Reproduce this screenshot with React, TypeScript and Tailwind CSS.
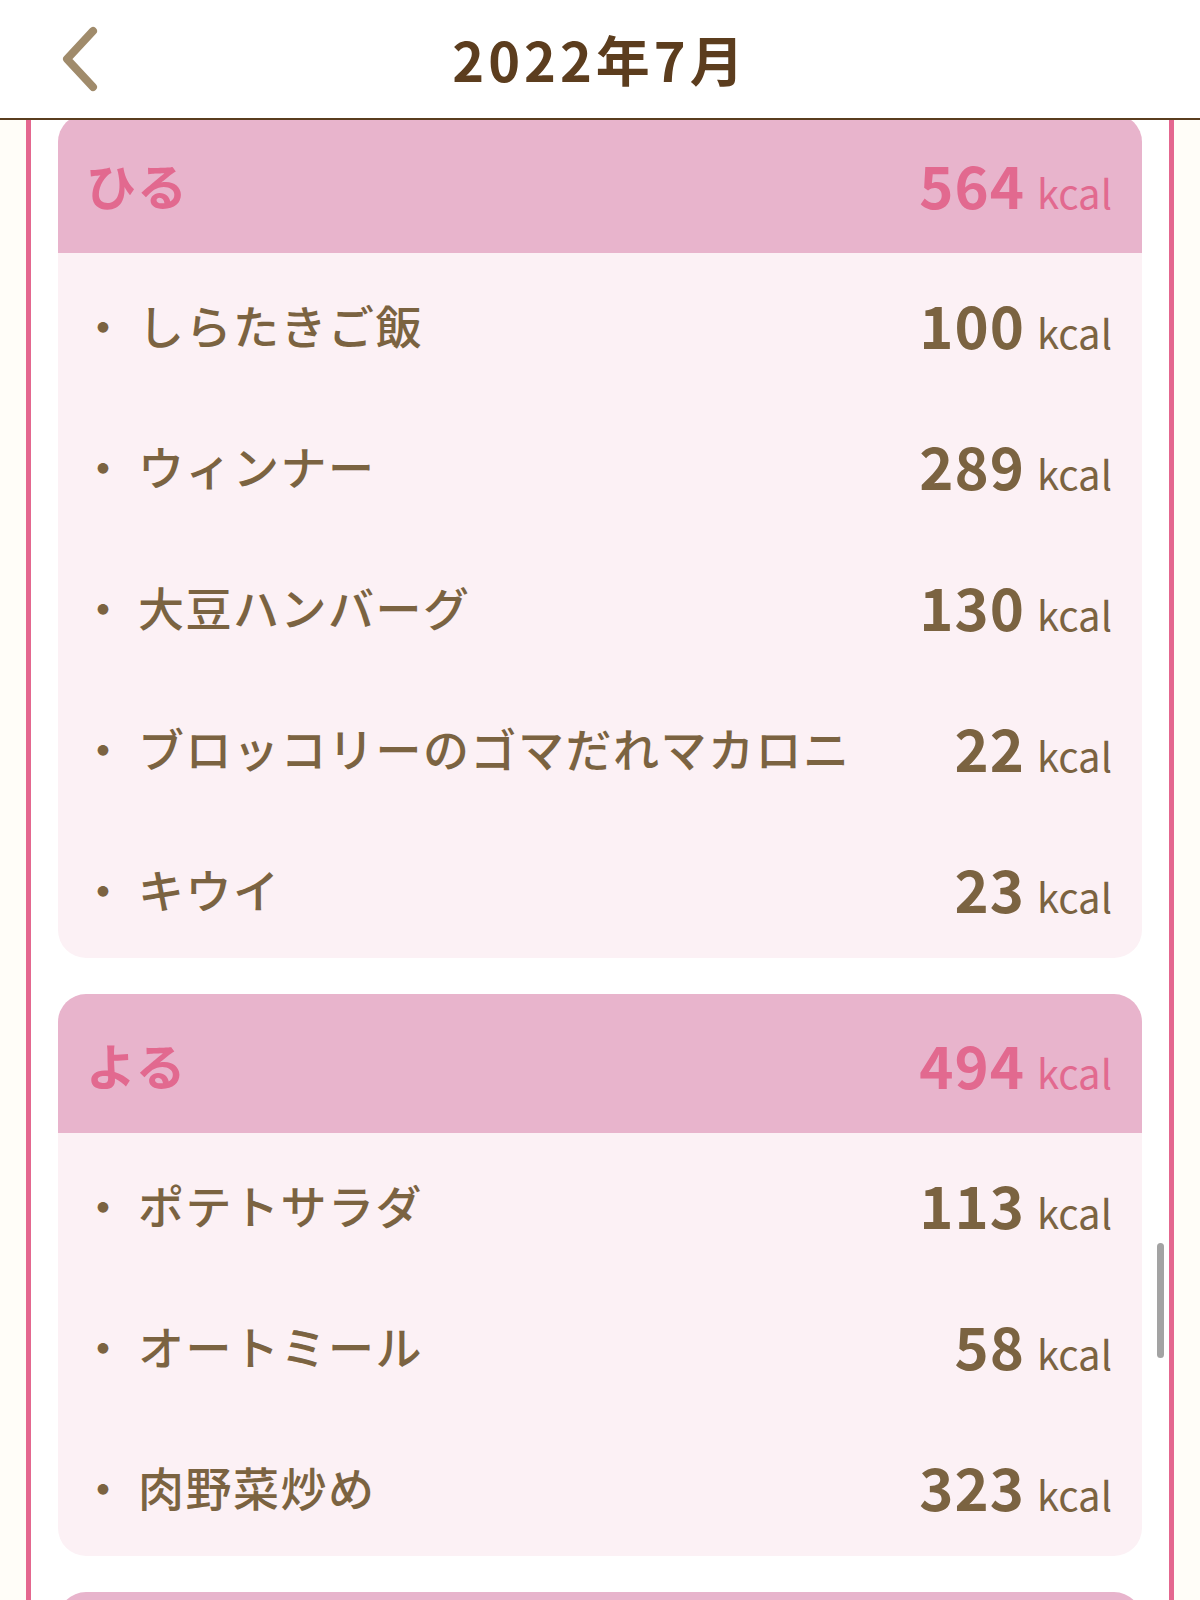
import React from 'react';

type Item = { name: string; kcal: number };
type Meal = { label: string; total: number; items: Item[] };

const MEALS: Meal[] = [
  {
    label: 'ひる',
    total: 564,
    items: [
      { name: 'しらたきご飯', kcal: 100 },
      { name: 'ウィンナー', kcal: 289 },
      { name: '大豆ハンバーグ', kcal: 130 },
      { name: 'ブロッコリーのゴマだれマカロニ', kcal: 22 },
      { name: 'キウイ', kcal: 23 },
    ],
  },
  {
    label: 'よる',
    total: 494,
    items: [
      { name: 'ポテトサラダ', kcal: 113 },
      { name: 'オートミール', kcal: 58 },
      { name: '肉野菜炒め', kcal: 323 },
    ],
  },
];

const JP = "font-['Noto_Sans_CJK_JP','Noto_Sans',sans-serif]";

function Kcal({ value, pink }: { value: number; pink?: boolean }) {
  return (
    <div className={`flex items-baseline gap-[12px] ${pink ? 'text-[#e2698f]' : 'text-[#7b6341]'}`}>
      <span className={`${JP} text-[58px] font-bold leading-none tracking-[1px]`}>{value}</span>
      <span className={`${JP} text-[40px] font-normal leading-none`}>kcal</span>
    </div>
  );
}

function MealCard({ meal, first }: { meal: Meal; first?: boolean }) {
  return (
    <section className={`rounded-[28px] overflow-hidden shrink-0 ${first ? '-mt-[6px]' : ''}`}>
      {/* Header band */}
      <div className="h-[139px] bg-[#e8b4cc] flex items-center justify-between pl-[28px] pr-[30px]">
        <span className={`${JP} text-[50px] font-bold text-[#e2698f] leading-none tracking-[1px]`}>{meal.label}</span>
        <Kcal value={meal.total} pink />
      </div>

      {/* Items */}
      <div className="bg-[#fcf1f5]">
        {meal.items.map((item) => (
          <div key={item.name} className="h-[141px] flex items-center justify-between pl-[22px] pr-[30px]">
            <div className={`${JP} flex items-center gap-[12px] text-[46px] font-medium text-[#7b6341] leading-none`}>
              <span className="w-[46px] text-center">・</span>
              <span className="tracking-[1.5px]">{item.name}</span>
            </div>
            <Kcal value={item.kcal} />
          </div>
        ))}
      </div>
    </section>
  );
}

export default function App() {
  return (
    <div className="w-[1200px] h-[1600px] overflow-hidden bg-[#fffdf8] relative flex flex-col">
      {/* Top bar */}
      <header className="relative z-10 h-[120px] shrink-0 bg-white border-b-2 border-[#5a3d1f] grid grid-cols-[1fr_auto_1fr] items-center">
        <div className="pl-[62px]">
          <svg width="40" height="66" viewBox="0 0 40 66" fill="none">
            <path d="M31 5 L5 33 L31 61" stroke="#a08b6b" strokeWidth="8" strokeLinecap="round" strokeLinejoin="round" />
          </svg>
        </div>
        <h1 className={`${JP} text-[54px] font-bold text-[#5c3d1e] tracking-[4px] leading-none`}>2022年7月</h1>
        <div />
      </header>

      {/* Meal list */}
      <main className="mx-[26px] flex-1 border-x-[5px] border-[#e4678f] bg-white px-[27px] flex flex-col gap-[36px]">
        {MEALS.map((meal, i) => (
          <MealCard key={meal.label} meal={meal} first={i === 0} />
        ))}
        {/* next card, scrolled below the fold */}
        <div className="h-[139px] shrink-0 rounded-t-[28px] bg-[#e8b4cc]" />
      </main>

      {/* Scroll indicator */}
      <div className="absolute left-[1157px] top-[1243px] w-[7px] h-[115px] rounded-full bg-[#a3a3a3]" />
    </div>
  );
}
